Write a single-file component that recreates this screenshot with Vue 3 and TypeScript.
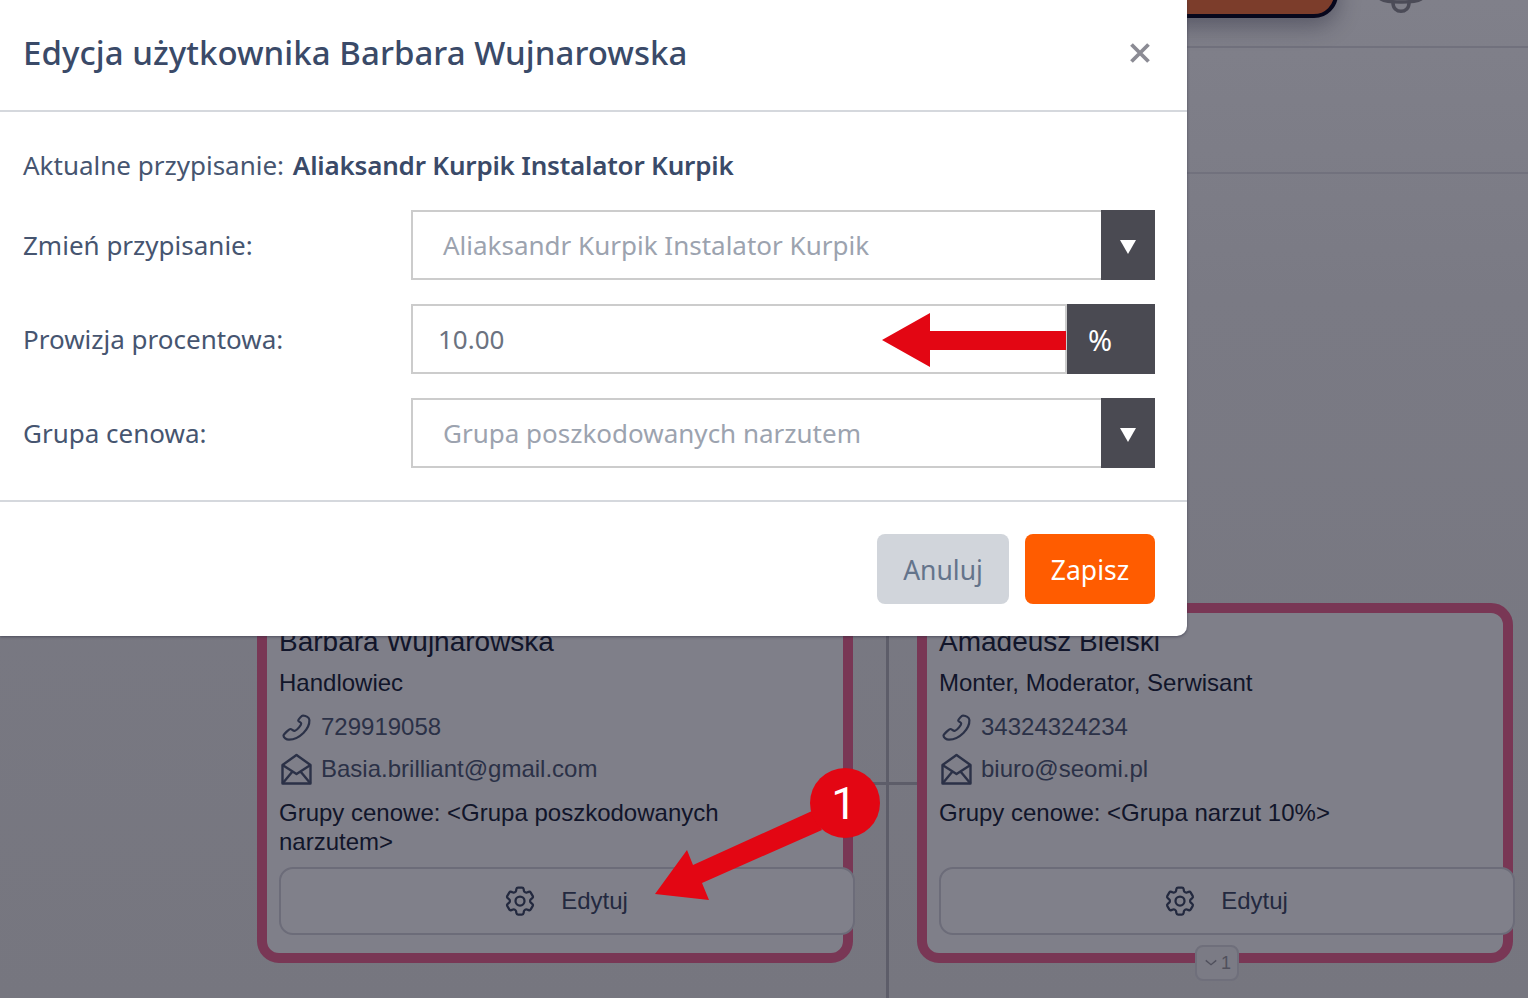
<script setup lang="ts">
interface Person {
  name: string
  roles: string
  phone: string
  email: string
  groups: string
}

const people: Person[] = [
  {
    name: 'Barbara Wujnarowska',
    roles: 'Handlowiec',
    phone: '729919058',
    email: 'Basia.brilliant@gmail.com',
    groups: 'Grupy cenowe: <Grupa poszkodowanych narzutem>',
  },
  {
    name: 'Amadeusz Bielski',
    roles: 'Monter, Moderator, Serwisant',
    phone: '34324324234',
    email: 'biuro@seomi.pl',
    groups: 'Grupy cenowe: <Grupa narzut 10%>',
  },
]

const cog =
  'M9.594 3.94c.09-.542.56-.94 1.11-.94h2.593c.55 0 1.02.398 1.11.94l.213 1.281c.063.374.313.686.645.87.074.04.147.083.22.127.325.196.72.257 1.075.124l1.217-.456a1.125 1.125 0 0 1 1.37.49l1.296 2.247a1.125 1.125 0 0 1-.26 1.431l-1.003.827c-.293.241-.438.613-.43.992a7.723 7.723 0 0 1 0 .255c-.008.378.137.75.43.991l1.004.827c.424.35.534.955.26 1.43l-1.298 2.247a1.125 1.125 0 0 1-1.369.491l-1.217-.456c-.355-.133-.75-.072-1.076.124a6.47 6.47 0 0 1-.22.128c-.331.183-.581.495-.644.869l-.213 1.281c-.09.543-.56.94-1.11.94h-2.594c-.55 0-1.019-.398-1.11-.94l-.213-1.281c-.062-.374-.312-.686-.644-.87a6.52 6.52 0 0 1-.22-.127c-.325-.196-.72-.257-1.076-.124l-1.217.456a1.125 1.125 0 0 1-1.369-.49l-1.297-2.247a1.125 1.125 0 0 1 .26-1.431l1.004-.827c.292-.24.437-.613.43-.991a6.932 6.932 0 0 1 0-.255c.007-.38-.138-.751-.43-.992l-1.004-.827a1.125 1.125 0 0 1-.26-1.43l1.297-2.247a1.125 1.125 0 0 1 1.37-.491l1.216.456c.356.133.751.072 1.076-.124.072-.044.146-.086.22-.128.332-.183.582-.495.644-.869l.214-1.28Z'
</script>

<template>
  <div class="page">
    <header class="topbar">
      <div class="brand"><span class="dot"></span><span class="dot"></span></div>
      <svg class="bell" viewBox="0 0 48 20" fill="none" stroke="#4b4b57" stroke-width="3.5">
        <path d="M4 0c6 4 34 4 40 0" stroke-linecap="round" />
        <path d="M16 4c0 11 16 11 16 0" />
      </svg>
    </header>
    <div class="subbar"></div>

    <main class="tree">
      <div class="line-v"></div>
      <div class="line-h"></div>
      <article v-for="p in people" :key="p.name" class="card">
        <h3 class="name">{{ p.name }}</h3>
        <p class="roles">{{ p.roles }}</p>
        <p class="contact first">
          <svg class="ico" viewBox="0 0 32 32" fill="none" stroke="#2b3147" stroke-width="2.200" stroke-linejoin="round">
            <path d="M22 4.500c3 .3 6.200 2 6.400 4.500.2 5-2.500 9.500-6 13-3.500 3.500-8.500 6.500-14.400 6.700-2.800 0-5.500-2.200-5.500-4.200 0-1 5.500-6.500 7-6.500 1.500 0 2.500 2.300 4.500 1.800 2.500-.8 6.200-5.800 6.200-7.300 0-1.500-3-1.500-3-3 0-1 3.500-5 4.800-5z" />
          </svg>
          <span>{{ p.phone }}</span>
        </p>
        <p class="contact">
          <svg class="ico" viewBox="0 0 32 32" fill="none" stroke="#2b3147" stroke-width="2.400" stroke-linejoin="round">
            <path d="M1.500 12L15.500 2l14 10v18.500h-28z" />
            <path d="M1.500 12l14 9 14-9M1.500 30.500l10-12M29.500 30.500l-10-12" />
          </svg>
          <span>{{ p.email }}</span>
        </p>
        <p class="groups">{{ p.groups }}</p>
        <button type="button" class="edit">
          <svg class="cog" viewBox="0 0 24 24" fill="none" stroke="#23293f" stroke-width="1.500">
            <path :d="cog" />
            <circle cx="12" cy="12" r="3" />
          </svg>
          <span>Edytuj</span>
        </button>
        <span v-if="p.name === 'Amadeusz Bielski'" class="children">
          <svg viewBox="0 0 16 10" fill="none" stroke="#50505c" stroke-width="1.500"><path d="M2 2l6 5 6-5" /></svg>
          1
        </span>
      </article>
    </main>

    <section class="modal">
      <div class="modal-head">
        <h2>Edycja użytkownika Barbara Wujnarowska</h2>
        <button type="button" class="close" aria-label="Zamknij">
          <svg viewBox="0 0 20 20" fill="none" stroke="#8b8b94" stroke-width="3.800"><path d="M1.500 1.500l17 17M18.500 1.500l-17 17" /></svg>
        </button>
      </div>
      <div class="modal-body">
        <p class="current">Aktualne przypisanie: <strong>Aliaksandr Kurpik Instalator Kurpik</strong></p>
        <div class="row">
          <label>Zmień przypisanie:</label>
          <div class="control">
            <span class="value">Aliaksandr Kurpik Instalator Kurpik</span>
            <span class="drop"><i class="tri"></i></span>
          </div>
        </div>
        <div class="row">
          <label>Prowizja procentowa:</label>
          <div class="control">
            <span class="value num">10.00</span>
            <span class="addon">%</span>
          </div>
        </div>
        <div class="row">
          <label>Grupa cenowa:</label>
          <div class="control">
            <span class="value">Grupa poszkodowanych narzutem</span>
            <span class="drop"><i class="tri"></i></span>
          </div>
        </div>
      </div>
      <div class="modal-foot">
        <button type="button" class="btn cancel">Anuluj</button>
        <button type="button" class="btn save">Zapisz</button>
      </div>
    </section>

    <svg class="marks" viewBox="0 0 1528 998">
      <path d="M882 340l48-27v18h136v19H930v17z" fill="#e30613" />
      <path d="M655 894l32-44 6 15 119-54 10 19-120 53 7 17z" fill="#e30613" />
      <circle cx="845" cy="803" r="35" fill="#e30613" />
    </svg>
    <span class="badge">1</span>
  </div>
</template>

<style>
html,
body {
  margin: 0;
  padding: 0;
  overflow: hidden;
}
</style>

<style scoped>
.page {
  position: relative;
  width: 1528px;
  height: 998px;
  overflow: hidden;
  display: flex;
  flex-direction: column;
  background: linear-gradient(180deg, #80808a 0%, #7a7a84 30%, #76767f 100%);
  font-family: "Liberation Sans", Arial, sans-serif;
}

.topbar {
  position: relative;
  height: 46px;
  border-bottom: 2px solid #71717d;
  flex: none;
}

.brand {
  position: absolute;
  right: 190px;
  top: -40px;
  width: 500px;
  height: 58px;
  box-sizing: border-box;
  background: #7c3d2b;
  border: 4px solid #07071c;
  border-radius: 24px;
  box-shadow: 0 8px 22px rgba(30, 30, 50, 0.4);
}

.dot {
  position: absolute;
  top: 31px;
  left: 80px;
  width: 9px;
  height: 9px;
  border-radius: 50%;
  background: #b0a8a8;
}

.dot + .dot {
  left: 98px;
}

.bell {
  position: absolute;
  left: 1377px;
  top: -1px;
  width: 48px;
  height: 20px;
}

.subbar {
  height: 124px;
  border-bottom: 2px solid #71717d;
  flex: none;
}

.tree {
  position: relative;
  flex: 1;
  display: flex;
  gap: 64px;
  padding: 429px 0 0 257px;
}

.line-v {
  position: absolute;
  left: 886px;
  top: 429px;
  bottom: 0;
  width: 3px;
  background: #5d5d69;
}

.line-h {
  position: absolute;
  left: 853px;
  top: 608px;
  width: 64px;
  height: 3px;
  background: #5d5d69;
}

.card {
  position: relative;
  box-sizing: border-box;
  width: 596px;
  height: 360px;
  flex: none;
  padding: 11px 12px 10px;
  border: 10px solid #793755;
  border-radius: 22px;
  background: #7f7f89;
  color: #11152a;
}

.name {
  margin: 0;
  font-size: 28px;
  line-height: 36px;
  font-weight: 400;
}

.roles {
  margin: 7px 0 0;
  font-size: 24px;
  line-height: 32px;
}

.contact {
  display: flex;
  align-items: center;
  gap: 8px;
  height: 36px;
  margin: 6px 0 0;
  font-size: 24px;
  color: #2b3147;
}

.contact.first {
  margin-top: 10px;
}

.ico {
  width: 32px;
  height: 32px;
  margin-left: 2px;
}

.groups {
  height: 58px;
  margin: 11px 0 0;
  font-size: 24px;
  line-height: 29px;
}

.edit {
  display: flex;
  align-items: center;
  justify-content: center;
  gap: 23px;
  box-sizing: border-box;
  width: 576px;
  height: 68px;
  margin-top: 11px;
  padding: 0 4px 0 0;
  background: #80808a;
  border: 2px solid #6c6c79;
  border-radius: 14px;
  font: inherit;
  font-size: 24px;
  color: #23293f;
}

.cog {
  width: 36px;
  height: 36px;
}

.children {
  position: absolute;
  left: 268px;
  top: 332px;
  display: flex;
  align-items: center;
  gap: 3px;
  box-sizing: border-box;
  width: 44px;
  height: 36px;
  padding-left: 7px;
  background: #7b7b85;
  border: 2px solid #6f6f7b;
  border-radius: 8px;
  font-size: 18px;
  color: #50505c;
}

.children svg {
  width: 14px;
  height: 10px;
}

.modal {
  position: absolute;
  left: 0;
  top: 0;
  width: 1187px;
  height: 636px;
  background: #fff;
  border-bottom-right-radius: 10px;
  box-shadow: 0 1px 3px rgba(40, 40, 60, 0.55);
  font-family: "Noto Sans", sans-serif;
}

.modal-head {
  display: flex;
  align-items: center;
  justify-content: space-between;
  box-sizing: border-box;
  height: 112px;
  padding: 0 37px 5px 23px;
  border-bottom: 2px solid #d5d8dd;
}

.modal-head h2 {
  margin: 0;
  font-size: 33px;
  font-weight: 500;
  letter-spacing: 0.05px;
  color: #3a4a68;
}

.close {
  display: flex;
  padding: 0;
  background: none;
  border: 0;
}

.close svg {
  width: 20px;
  height: 20px;
}

.modal-body {
  box-sizing: border-box;
  height: 390px;
  padding: 34px 32px 0 23px;
  border-bottom: 2px solid #d5d8dd;
  color: #465570;
  font-size: 26px;
}

.current {
  margin: 0 0 26px;
  line-height: 38px;
}

.current strong {
  margin-left: 2px;
  font-weight: 600;
  color: #3a4a68;
  letter-spacing: -0.2px;
}

.row {
  display: grid;
  grid-template-columns: 388px 1fr;
  align-items: center;
  margin-bottom: 24px;
}

.control {
  display: flex;
  box-sizing: border-box;
  height: 70px;
  border: 2px solid #ccc;
  border-right: 0;
  align-items: stretch;
}

.value {
  flex: 1;
  display: flex;
  align-items: center;
  padding-left: 30px;
  color: #9ca3af;
}

.value.num {
  padding-left: 25px;
  border-right: 2px solid #ccc;
  color: #6b7280;
}

.drop {
  display: flex;
  align-items: center;
  justify-content: center;
  width: 54px;
  margin: -2px 0;
  background: #4a4a52;
}

.tri {
  width: 0;
  height: 0;
  margin-top: 3px;
  border-left: 8px solid transparent;
  border-right: 8px solid transparent;
  border-top: 14px solid #fff;
}

.addon {
  display: flex;
  align-items: center;
  box-sizing: border-box;
  width: 88px;
  margin: -2px 0;
  padding-left: 21px;
  background: #4a4a52;
  color: #fff;
  font-size: 29px;
}

.modal-foot {
  display: flex;
  justify-content: flex-end;
  gap: 16px;
  padding: 32px 32px 0 0;
}

.btn {
  height: 70px;
  padding: 2px 0 0;
  border: 0;
  border-radius: 8px;
  font: inherit;
  font-size: 26.500px;
}

.cancel {
  width: 132px;
  background: #d1d5db;
  color: #64748b;
}

.save {
  width: 130px;
  background: #ff5c00;
  color: #fff;
}

.marks {
  position: absolute;
  inset: 0;
  width: 1528px;
  height: 998px;
}

.badge {
  position: absolute;
  left: 809px;
  top: 769px;
  width: 70px;
  line-height: 70px;
  text-align: center;
  font-family: Roboto, sans-serif;
  font-size: 45px;
  font-weight: 400;
  color: #fff;
}
</style>
